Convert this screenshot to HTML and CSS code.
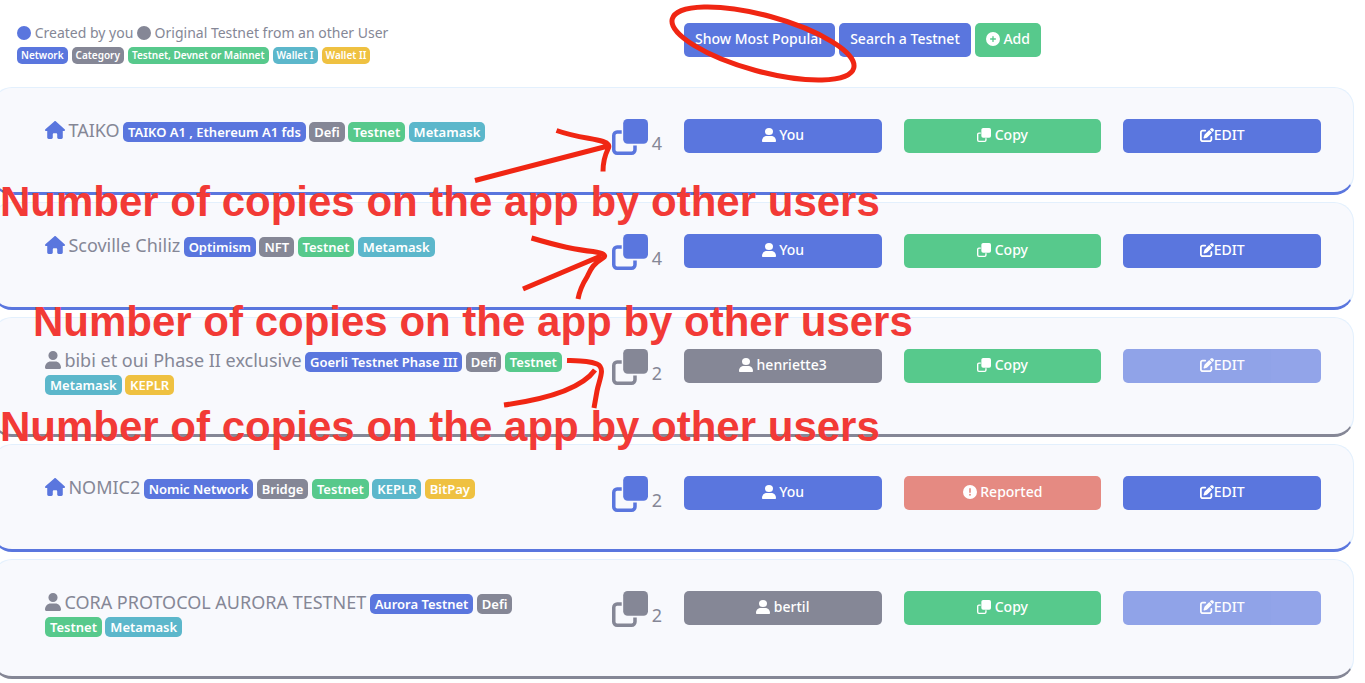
FILE: index.html
```html
<!DOCTYPE html>
<html lang="en">
<head>
<meta charset="utf-8">
<meta name="viewport" content="width=device-width, initial-scale=1">
<title>Testnets</title>
<link rel="stylesheet" href="styles.css">
</head>
<body>
<svg class="sprite" aria-hidden="true">
  <symbol id="house" viewBox="0 0 576 512"><path d="M575.8 255.5c0 18-15 32.1-32 32.1h-32l.7 160.2c0 2.7-.2 5.4-.5 8.1V472c0 22.1-17.9 40-40 40H456c-1.1 0-2.2 0-3.3-.1c-1.4 .1-2.8 .1-4.2 .1H416 392c-22.1 0-40-17.9-40-40V448 384c0-17.7-14.3-32-32-32H256c-17.7 0-32 14.3-32 32v64 24c0 22.1-17.9 40-40 40H160 128.1c-1.5 0-3-.1-4.5-.2c-1.2 .1-2.4 .2-3.6 .2H104c-22.1 0-40-17.9-40-40V360c0-.9 0-1.9 .1-2.8V287.6H32c-18 0-32-14-32-32.1c0-9 3-17 10-24L266.4 8c7-7 15-8 22-8s15 2 21 7L564.8 231.5c8 7 12 15 11 24z"/></symbol>
  <symbol id="user" viewBox="0 0 448 512" preserveAspectRatio="none"><path d="M224 256A128 128 0 1 0 224 0a128 128 0 1 0 0 256zM160 296C70 296 0 370 0 472C0 498 13 512 34 512H414C435 512 448 498 448 472C448 370 378 296 288 296H160z"/></symbol>
  <symbol id="clone" viewBox="0 0 512 512"><path fill="none" stroke="currentColor" stroke-width="50" d="M138 185H73a48 48 0 0 0-48 48V439a48 48 0 0 0 48 48H279a48 48 0 0 0 48-48V376"/><rect x="159" width="353" height="353" rx="64"/></symbol>
  <symbol id="edit" viewBox="0 0 512 512"><path d="M471.6 21.7c-21.9-21.9-57.3-21.9-79.2 0L362.3 51.7l97.9 97.9 30.1-30.1c21.9-21.9 21.9-57.3 0-79.2L471.6 21.7zm-299.2 220c-6.1 6.1-10.8 13.6-13.5 21.9l-29.6 88.8c-2.9 8.6-.6 18.1 5.8 24.6s15.9 8.7 24.6 5.8l88.8-29.6c8.2-2.7 15.7-7.4 21.9-13.5L437.7 172.3 339.7 74.3 172.4 241.7zM96 64C43 64 0 107 0 160V416c0 53 43 96 96 96H352c53 0 96-43 96-96V320c0-17.7-14.3-32-32-32s-32 14.3-32 32v96c0 17.7-14.3 32-32 32H96c-17.7 0-32-14.3-32-32V160c0-17.7 14.3-32 32-32h96c17.7 0 32-14.3 32-32s-14.3-32-32-32H96z"/></symbol>
  <symbol id="plus" viewBox="0 0 512 512"><path fill-rule="evenodd" d="M256 512A256 256 0 1 0 256 0a256 256 0 1 0 0 512zM232 344V280H168c-13.3 0-24-10.7-24-24s10.7-24 24-24h64V168c0-13.3 10.7-24 24-24s24 10.7 24 24v64h64c13.3 0 24 10.7 24 24s-10.7 24-24 24H280v64c0 13.3-10.7 24-24 24s-24-10.7-24-24z"/></symbol>
  <symbol id="alert" viewBox="0 0 512 512"><path fill-rule="evenodd" d="M256 512A256 256 0 1 0 256 0a256 256 0 1 0 0 512zM226 142c0-17 13-30 30-30s30 13 30 30v122c0 17-13 30-30 30s-30-13-30-30zM256 322a34 34 0 1 0 0 68a34 34 0 1 0 0-68z"/></symbol>
  <symbol id="dot" viewBox="0 0 512 512"><circle cx="256" cy="256" r="256"/></symbol>
</svg>

<header class="top">
  <div class="legend">
    <p class="legend-owners"><svg class="icon blue"><use href="#dot"/></svg> Created by you <svg class="icon grey"><use href="#dot"/></svg> Original Testnet from an other User</p>
    <p class="legend-tags"><span class="tag small network">Network</span> <span class="tag small category">Category</span> <span class="tag small net">Testnet, Devnet or Mainnet</span> <span class="tag small wallet">Wallet I</span> <span class="tag small wallet2">Wallet II</span></p>
  </div>
  <div class="actions">
    <button class="btn primary">Show Most Popular</button>
    <button class="btn primary">Search a Testnet</button>
    <button class="btn success"><svg class="icon"><use href="#plus"/></svg> Add</button>
  </div>
</header>

<main class="list">
  <article class="card mine">
    <h2 class="title"><svg class="icon wide"><use href="#house"/></svg> <span class="name">TAIKO</span> <span class="tag network">TAIKO A1 , Ethereum A1 fds</span> <span class="tag category">Defi</span> <span class="tag net">Testnet</span> <span class="tag wallet">Metamask</span></h2>
    <div class="copies"><svg class="copies-icon"><use href="#clone"/></svg> <span>4</span></div>
    <button class="btn primary"><svg class="icon"><use href="#user"/></svg> You</button>
    <button class="btn success"><svg class="icon"><use href="#clone"/></svg> Copy</button>
    <button class="btn primary"><svg class="icon"><use href="#edit"/></svg>EDIT</button>
  </article>

  <article class="card mine">
    <h2 class="title"><svg class="icon wide"><use href="#house"/></svg> <span class="name">Scoville Chiliz</span> <span class="tag network">Optimism</span> <span class="tag category">NFT</span> <span class="tag net">Testnet</span> <span class="tag wallet">Metamask</span></h2>
    <div class="copies"><svg class="copies-icon"><use href="#clone"/></svg> <span>4</span></div>
    <button class="btn primary"><svg class="icon"><use href="#user"/></svg> You</button>
    <button class="btn success"><svg class="icon"><use href="#clone"/></svg> Copy</button>
    <button class="btn primary"><svg class="icon"><use href="#edit"/></svg>EDIT</button>
  </article>

  <article class="card">
    <h2 class="title"><svg class="icon"><use href="#user"/></svg> <span class="name">bibi et oui Phase II exclusive</span> <span class="tag network">Goerli Testnet Phase III</span> <span class="tag category">Defi</span> <span class="tag net">Testnet</span> <span class="tag wallet">Metamask</span> <span class="tag wallet2">KEPLR</span></h2>
    <div class="copies"><svg class="copies-icon"><use href="#clone"/></svg> <span>2</span></div>
    <button class="btn secondary"><svg class="icon"><use href="#user"/></svg> henriette3</button>
    <button class="btn success"><svg class="icon"><use href="#clone"/></svg> Copy</button>
    <button class="btn primary" disabled><svg class="icon"><use href="#edit"/></svg>EDIT</button>
  </article>

  <article class="card mine">
    <h2 class="title"><svg class="icon wide"><use href="#house"/></svg> <span class="name">NOMIC2</span> <span class="tag network">Nomic Network</span> <span class="tag category">Bridge</span> <span class="tag net">Testnet</span> <span class="tag wallet">KEPLR</span> <span class="tag wallet2">BitPay</span></h2>
    <div class="copies"><svg class="copies-icon"><use href="#clone"/></svg> <span>2</span></div>
    <button class="btn primary"><svg class="icon"><use href="#user"/></svg> You</button>
    <button class="btn danger"><svg class="icon"><use href="#alert"/></svg> Reported</button>
    <button class="btn primary"><svg class="icon"><use href="#edit"/></svg>EDIT</button>
  </article>

  <article class="card">
    <h2 class="title"><svg class="icon"><use href="#user"/></svg> <span class="name">CORA PROTOCOL AURORA TESTNET</span> <span class="tag network">Aurora Testnet</span> <span class="tag category">Defi</span> <span class="tag net">Testnet</span> <span class="tag wallet">Metamask</span></h2>
    <div class="copies"><svg class="copies-icon"><use href="#clone"/></svg> <span>2</span></div>
    <button class="btn secondary"><svg class="icon"><use href="#user"/></svg> bertil</button>
    <button class="btn success"><svg class="icon"><use href="#clone"/></svg> Copy</button>
    <button class="btn primary" disabled><svg class="icon"><use href="#edit"/></svg>EDIT</button>
  </article>
</main>

<svg class="marks" width="900" height="420" viewBox="0 0 900 420" aria-hidden="true">
  <ellipse cx="763" cy="43.500" rx="94" ry="28" transform="rotate(15.200 763 43.500)"/>
  <path d="M475 180.500L608 146M556.500 130.500C578 138 592 138 603 141.500Q611 144 608 149Q603 159 603 171.500"/>
  <path d="M523 289L601 256M531.500 238C555 245 575 250 593 251.500Q609 254 603 258C592 265 591 269 587 277Q580 288 578 299"/>
  <path d="M504 405C548 399 582 388 595 370M567 360.500C583 361 590 361 597 364C606 368 599 380 597 391L594 408"/>
</svg>
<p class="note note-1">Number of copies on the app by other users</p>
<p class="note note-2">Number of copies on the app by other users</p>
<p class="note note-3">Number of copies on the app by other users</p>
</body>
</html>
```
FILE: styles.css
```css
:root {
  --blue: #5a76de;
  --grey: #858796;
  --green: #57c98c;
  --teal: #5cb7cb;
  --yellow: #efc141;
  --red: #e58a82;
}

* { box-sizing: border-box; }

body {
  margin: 0;
  position: relative;
  overflow-x: hidden;
  background: #fff;
  color: var(--grey);
  font-family: "Noto Sans", "Open Sans", sans-serif;
  font-size: 14px;
}

.sprite { display: none; }

p, h2 { margin: 0; }

.icon {
  height: 1em;
  width: 1em;
  fill: currentColor;
  vertical-align: -2px;
}

.blue { color: var(--blue); }
.grey { color: var(--grey); }

.top {
  display: grid;
  grid-template-columns: 1fr 1fr;
  padding: 23px 14px 30px 17px;
}

.legend { height: 34px; }
.legend-owners { line-height: 20px; }
.legend-tags {
  display: flex;
  gap: 4px;
  margin-top: 4px;
}

.actions {
  display: flex;
  gap: 4px;
}

.tag {
  display: inline-block;
  padding: 0 5px;
  border-radius: 5px;
  color: #fff;
  font-size: 13px;
  font-weight: 600;
  line-height: 20px;
  white-space: nowrap;
}
.tag.small {
  padding: 0 4px;
  font-size: 10px;
  line-height: 17px;
}
.network { background: var(--blue); }
.category { background: var(--grey); }
.net { background: var(--green); }
.wallet { background: var(--teal); }
.wallet2 { background: var(--yellow); }

.btn {
  height: 34px;
  padding: 0 11px 4px;
  border: 0;
  border-radius: 5px;
  color: #fff;
  font: inherit;
  font-weight: 500;
  white-space: nowrap;
}
.btn:disabled { opacity: 0.65; }
.primary { background: var(--blue); }
.secondary { background: var(--grey); }
.success { background: var(--green); }
.danger { background: var(--red); }

.list {
  display: grid;
  gap: 7px;
  margin: 0 11px 5px -8px;
}

.card {
  display: grid;
  grid-template-columns: repeat(12, 1fr);
  column-gap: 22px;
  align-items: start;
  padding: 31px 32px 37px;
  border: 1px solid #e3f0fd;
  border-bottom: 3px solid var(--grey);
  border-radius: 20px;
  background: #f8f9fd;
}
.card.mine { border-bottom-color: var(--blue); }
.card .btn { grid-column: span 2; }

.title {
  grid-column: span 5;
  margin-right: -14px;
  padding-left: 20px;
  font-size: 13px;
  font-weight: 400;
  line-height: 23px;
}
.title .icon {
  width: 16px;
  height: 18px;
}
.title .wide { width: 20px; }
.mine .title .icon { color: var(--blue); }
.name { font-size: 18px; }

.copies {
  display: flex;
  justify-content: flex-end;
  align-items: flex-end;
  gap: 4px;
  font-size: 18px;
  line-height: 24px;
}
.copies-icon {
  width: 36px;
  height: 36px;
  color: var(--grey);
  fill: currentColor;
}
.mine .copies-icon { color: var(--blue); }

.marks {
  position: absolute;
  top: 0;
  left: 0;
  fill: none;
  stroke: #f02613;
  stroke-width: 5;
  pointer-events: none;
}

.note {
  position: absolute;
  color: #f23a36;
  font-family: "Liberation Sans", Arial, sans-serif;
  font-size: 42px;
  font-weight: 700;
  line-height: 48px;
  white-space: nowrap;
  pointer-events: none;
}
.note-1 { top: 178px; left: 0; }
.note-2 { top: 298px; left: 33px; }
.note-3 { top: 403px; left: 0; }
```
